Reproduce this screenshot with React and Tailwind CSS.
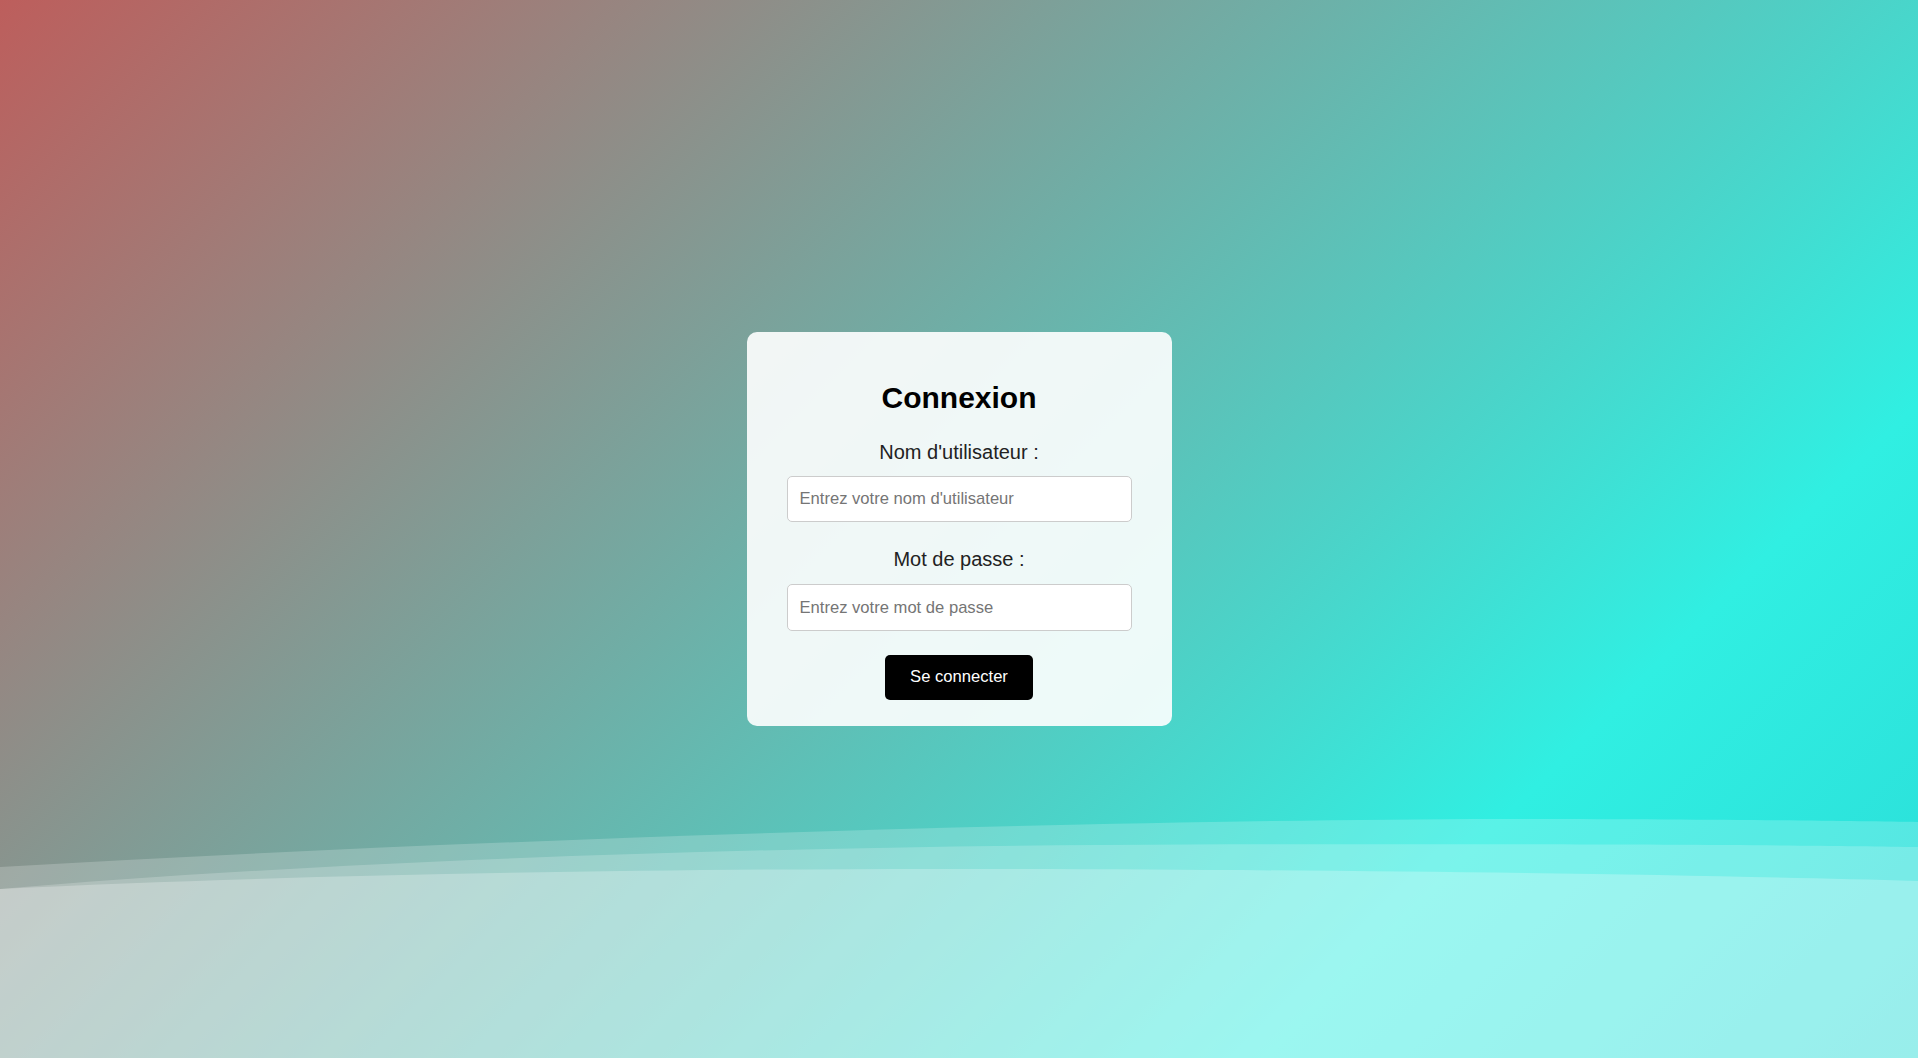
import React from "react";

// decorative waves along the bottom edge
function Waves() {
  return (
    <svg
      className="pointer-events-none absolute bottom-0 left-0 h-[240px] w-full"
      viewBox="0 0 1918 240"
      preserveAspectRatio="none"
      aria-hidden
    >
      <path
        d="M0,49 C500,20 1100,2 1500,1 C1700,1 1850,3 1918,4 L1918,240 L0,240 Z"
        fill="#ffffff"
        fillOpacity="0.2"
      />
      <path
        d="M0,71 C300,45 700,30 1100,27 C1500,25 1800,27 1918,29 L1918,240 L0,240 Z"
        fill="#ffffff"
        fillOpacity="0.2"
      />
      <path
        d="M0,71 C300,56 700,50 1000,51 C1400,52 1700,57 1918,63 L1918,240 L0,240 Z"
        fill="#ffffff"
        fillOpacity="0.25"
      />
    </svg>
  );
}

export default function App() {
  return (
    <div className="relative flex h-screen w-full items-center justify-center overflow-hidden bg-[linear-gradient(135deg,#bd5e5c_0%,#30efe2_78%,#2adcd8_100%)] font-['Liberation_Sans',Arial,sans-serif]">
      <Waves />

      <form
        className="relative z-10 flex w-[425px] flex-col rounded-[10px] bg-white/90 px-10 pb-[26px] pt-[48px]"
        onSubmit={(e) => e.preventDefault()}
      >
        <h2 className="mb-[23px] text-center text-[30px] font-bold leading-[36px] text-black">
          Connexion
        </h2>

        <label
          htmlFor="username"
          className="mb-[10px] text-center text-[20px] leading-[27px] text-[#222]"
        >
          Nom d'utilisateur :
        </label>
        <input
          id="username"
          type="text"
          placeholder="Entrez votre nom d'utilisateur"
          className="h-[46px] w-full rounded-[5px] border border-[#cccccc] bg-white px-3 text-[16.6px] text-[#222] outline-none placeholder:text-[#757575]"
        />

        <label
          htmlFor="password"
          className="mb-[11px] mt-[24px] text-center text-[20px] leading-[27px] text-[#222]"
        >
          Mot de passe :
        </label>
        <input
          id="password"
          type="password"
          placeholder="Entrez votre mot de passe"
          className="h-[47px] w-full rounded-[5px] border border-[#cccccc] bg-white px-3 text-[16.6px] text-[#222] outline-none placeholder:text-[#757575]"
        />

        <button
          type="submit"
          className="mx-auto mt-[24px] h-[45px] w-[148px] rounded-[5px] bg-black text-[16.6px] text-white"
        >
          Se connecter
        </button>
      </form>
    </div>
  );
}
